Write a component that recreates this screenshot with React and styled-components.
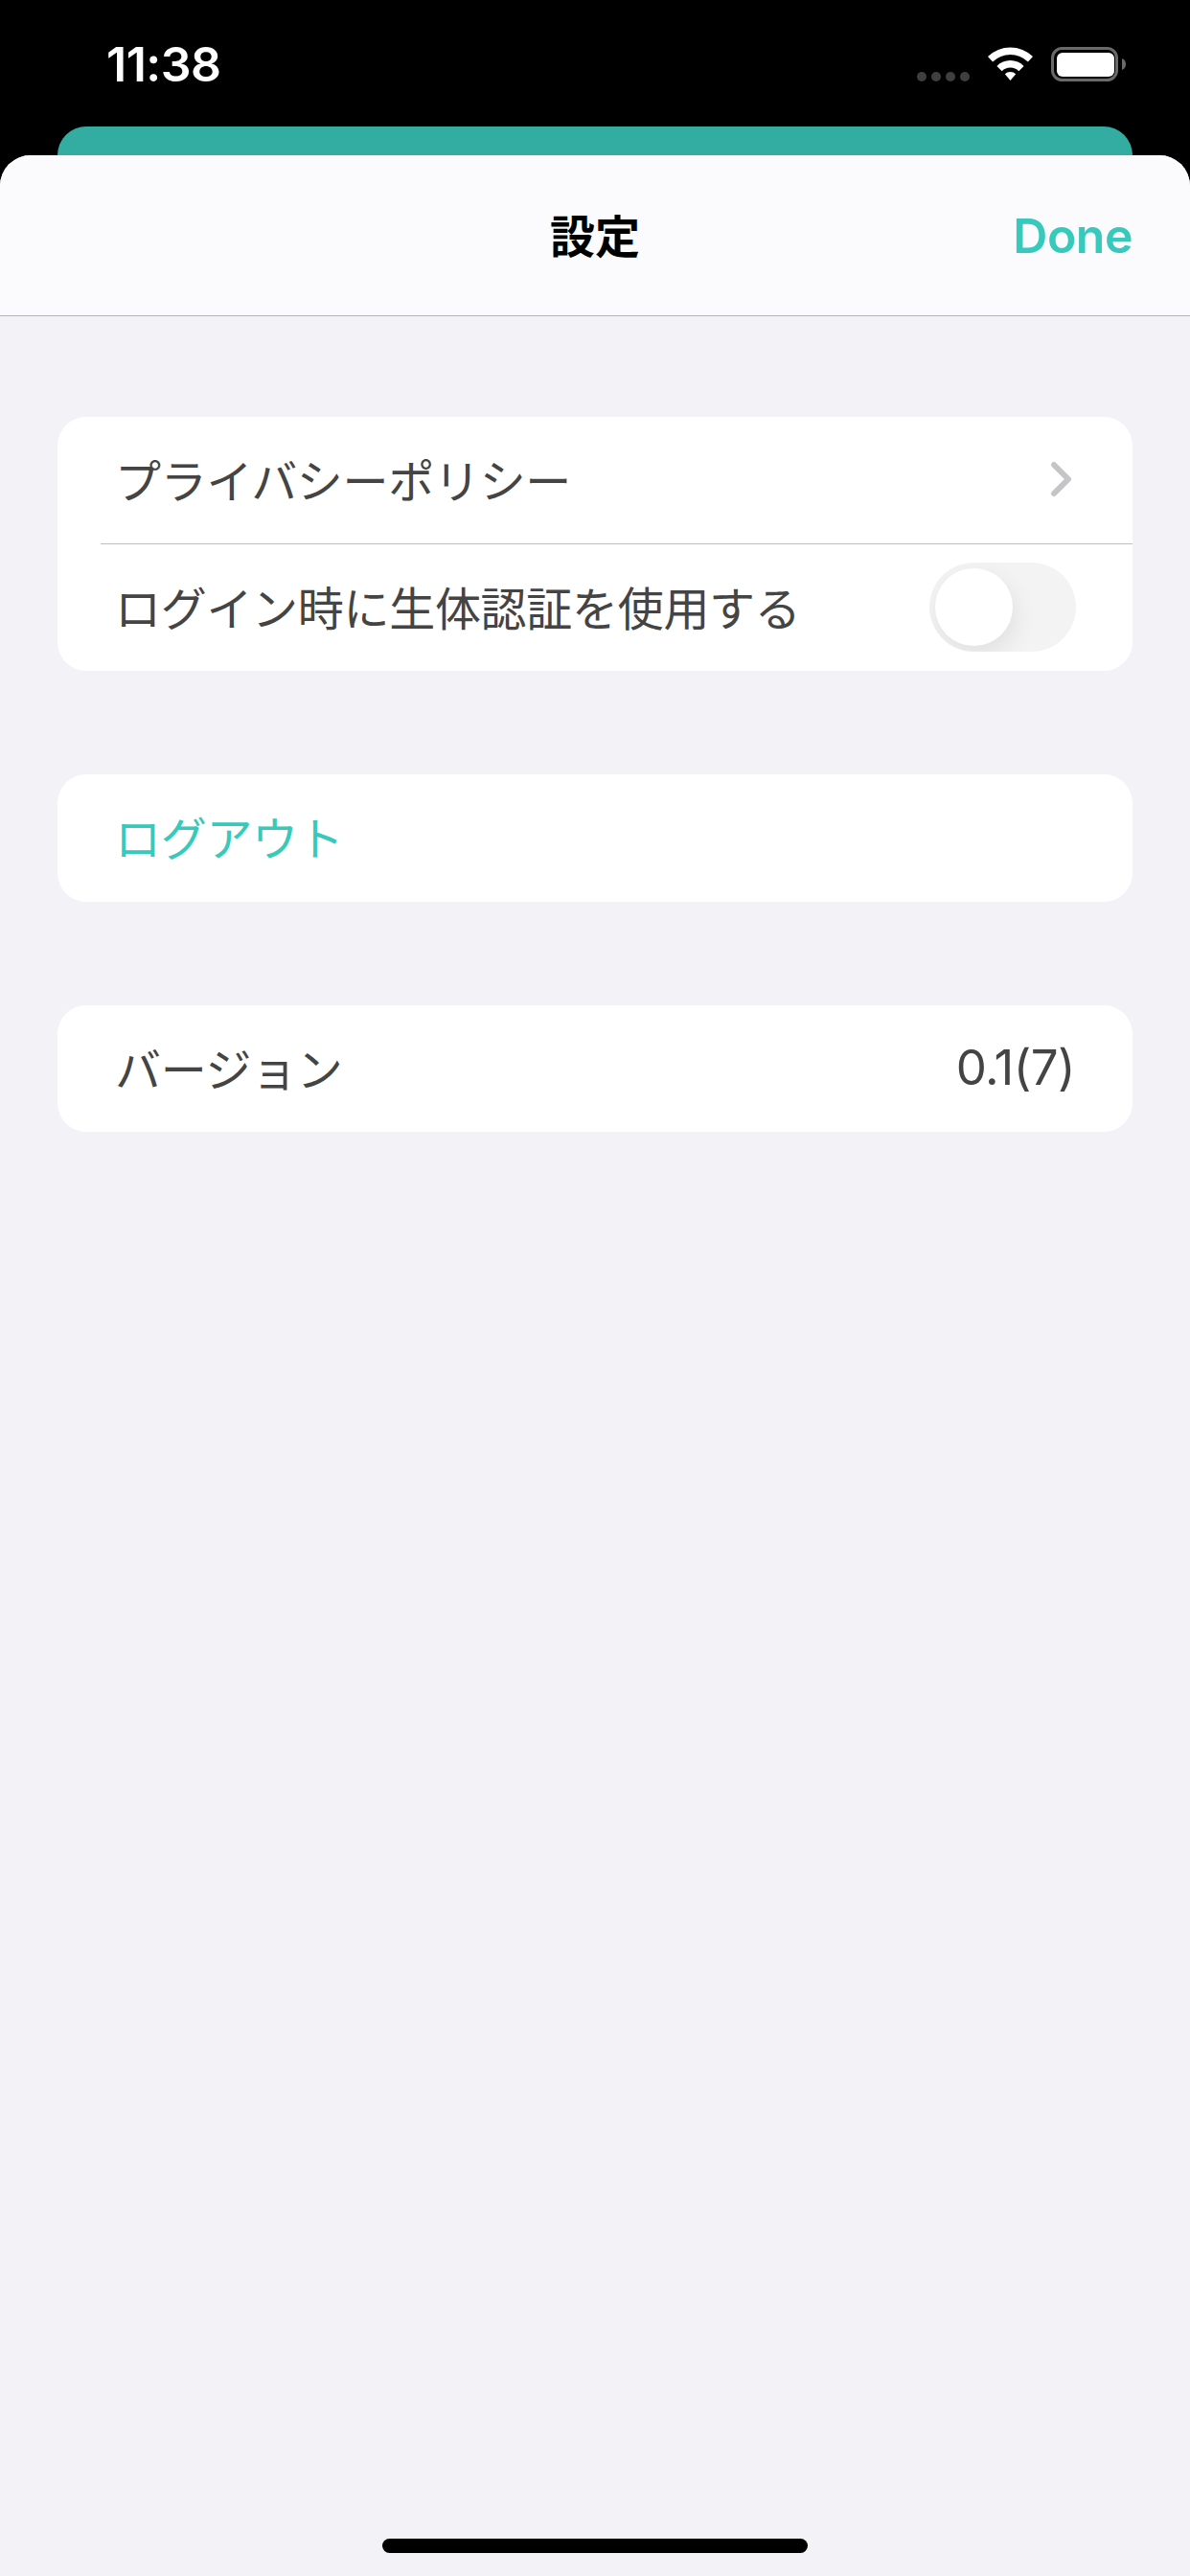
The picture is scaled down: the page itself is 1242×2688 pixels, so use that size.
import React from "react";
import styled, { createGlobalStyle } from "styled-components";

const Global = createGlobalStyle`
  html, body { margin: 0; padding: 0; background: #000; }
  * { box-sizing: border-box; }
`;

const UI = `Inter, "Noto Sans CJK JP", sans-serif`;
const JP = `"Noto Sans CJK JP", sans-serif`;

const Screen = styled.div`
  width: 1242px;
  height: 2688px;
  background: #000;
  display: flex;
  flex-direction: column;
  overflow: hidden;
`;
const StatusBar = styled.div`
  height: 132px;
  flex: none;
  display: flex;
  justify-content: space-between;
  padding: 42px 65px 0 111px;
`;
const Clock = styled.div`
  font: 600 50px/51px ${UI};
  color: #fff;
  letter-spacing: -0.5px;
`;
const StatusIcons = styled.div`
  display: flex;
  align-items: flex-start;
  padding-top: 7px;
`;
const Dots = styled.div`
  display: flex;
  gap: 5px;
  margin: 26px 19px 0 0;
`;
const Dot = styled.span`
  width: 10px;
  height: 10px;
  border-radius: 50%;
  background: #3f3f3f;
`;
const Wifi = styled.svg`
  width: 47px;
  height: 36px;
  margin-right: 19px;
  display: block;
`;
const Battery = styled.svg`
  width: 80px;
  height: 36px;
  display: block;
`;
const ParentPeek = styled.div`
  flex: none;
  height: 30px;
  margin: 0 60px;
  background: #33ada2;
  border-radius: 30px 30px 0 0;
`;
const Sheet = styled.div`
  flex: 1;
  min-height: 0;
  display: flex;
  flex-direction: column;
  background: #f2f2f7;
  border-radius: 32px 32px 0 0;
  overflow: hidden;
`;
const Nav = styled.header`
  flex: none;
  height: 168px;
  display: grid;
  grid-template-columns: 1fr auto 1fr;
  align-items: center;
  padding: 0 60px;
  background: #fbfbfd;
  border-bottom: 1.5px solid #b4b4b6;
`;
const Title = styled.h1`
  grid-column: 2;
  margin: 0 0 3px;
  font: 700 47px/60px ${JP};
  color: #000;
`;
const Done = styled.span`
  justify-self: end;
  font: 600 50px/60px ${UI};
  color: #37c9bb;
  letter-spacing: -0.5px;
`;
const Body = styled.main`
  display: flex;
  flex-direction: column;
  gap: 108px;
  padding: 105px 60px 0;
`;
const Card = styled.section`
  background: #fff;
  border-radius: 30px;
  overflow: hidden;
`;
const Row = styled.div`
  height: ${(p) => p.$h || 132}px;
  display: flex;
  align-items: center;
  justify-content: space-between;
  padding: 0 62px 0 60px;
  & + & {
    margin-left: 45px;
    padding-left: 15px;
    border-top: 1.5px solid #bfbfc1;
  }
`;
const Label = styled.span`
  font: 400 48px/60px ${JP};
  color: ${(p) => p.$accent ? "#37c9bb" : "#444"};
  letter-spacing: -0.3px;
  margin-bottom: 5px;
`;
const Value = styled.span`
  font: 400 51px/60px ${UI};
  color: #444;
  letter-spacing: -0.6px;
  margin: 0 -2px 3px 0;
`;
const Chevron = styled.svg`
  width: 27px;
  height: 42px;
  display: block;
  margin: 0 -2px 2px 0;
`;
const Toggle = styled.div`
  width: 153px;
  height: 93px;
  border-radius: 46.5px;
  background: #f3f3f3;
  padding: 6px;
  margin: 0 -3px 2px 0;
  overflow: hidden;
`;
const Knob = styled.div`
  width: 81px;
  height: 81px;
  border-radius: 50%;
  background: #fff;
  box-shadow: 3px 9px 24px rgba(0, 0, 0, 0.08);
`;
const HomeBar = styled.div`
  width: 444px;
  height: 15px;
  margin: auto auto 24px;
  border-radius: 8px;
  background: #000;
  flex: none;
`;

export default function App() {
  return (
    <Screen>
      <Global />
      <StatusBar>
        <Clock>11:38</Clock>
        <StatusIcons>
          <Dots><Dot /><Dot /><Dot /><Dot /></Dots>
          <Wifi viewBox="0 0 47 36">
            <path fill="#fff" d="M0 10A34 34 0 0 1 47 10L41.9 15.6A26 26 0 0 0 5.1 15.6Z" />
            <path fill="#fff" d="M9.4 19.9A20 20 0 0 1 37.6 19.9L32.3 25.2A12.5 12.5 0 0 0 14.7 25.2Z" />
            <path fill="#fff" d="M17.8 28.3A8 8 0 0 1 29.2 28.3L23.5 35Z" />
          </Wifi>
          <Battery viewBox="0 0 80 36">
            <rect x="1.5" y="1.5" width="67" height="33" rx="10" fill="none" stroke="#6a6a6a" strokeWidth="3" />
            <rect x="6" y="6" width="60" height="25" rx="6" fill="#fff" />
            <path fill="#6a6a6a" d="M74 12C77 13 78 15.5 78 18C78 20.5 77 23 74 24Z" />
          </Battery>
        </StatusIcons>
      </StatusBar>
      <ParentPeek />
      <Sheet>
        <Nav>
          <Title>設定</Title>
          <Done>Done</Done>
        </Nav>
        <Body>
          <Card>
            <Row>
              <Label>プライバシーポリシー</Label>
              <Chevron viewBox="0 0 27 42">
                <path d="M5 6L20 21L5 36" fill="none" stroke="#c5c5c7" strokeWidth="6" strokeLinecap="round" strokeLinejoin="round" />
              </Chevron>
            </Row>
            <Row $h={133}>
              <Label>ログイン時に生体認証を使用する</Label>
              <Toggle><Knob /></Toggle>
            </Row>
          </Card>
          <Card>
            <Row $h={133}><Label $accent>ログアウト</Label></Row>
          </Card>
          <Card>
            <Row>
              <Label>バージョン</Label>
              <Value>0.1(7)</Value>
            </Row>
          </Card>
        </Body>
        <HomeBar />
      </Sheet>
    </Screen>
  );
}
